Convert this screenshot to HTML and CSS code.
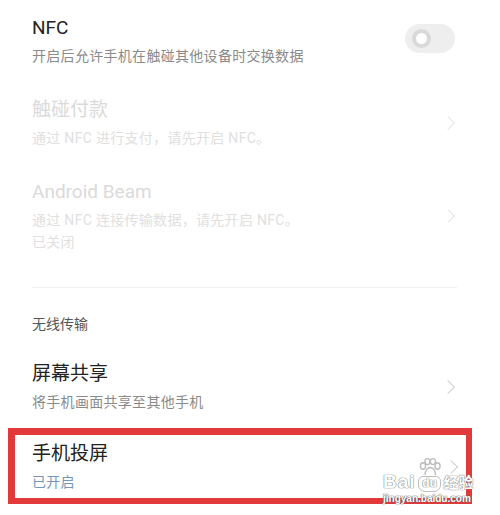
FILE: index.html
```html
<!DOCTYPE html>
<html lang="zh-CN">
  <head>
    <meta charset="UTF-8" />
    <meta name="viewport" content="width=device-width, initial-scale=1" />
    <title>NFC</title>
    <link rel="stylesheet" href="styles.css">
  </head>
  <body>
    <div class="page">
      <!-- NFC switch -->
      <div class="item">
        <div class="text">
          <div class="title">NFC</div>
          <div class="sub">开启后允许手机在触碰其他设备时交换数据</div>
        </div>
        <div class="toggle"><span class="knob"></span></div>
      </div>

      <div class="item disabled">
        <div class="text">
          <div class="title">触碰付款</div>
          <div class="sub">通过 NFC 进行支付，请先开启 NFC。</div>
        </div>
        <span class="chevron"></span>
      </div>

      <div class="item disabled">
        <div class="text">
          <div class="title">Android Beam</div>
          <div class="sub">通过 NFC 连接传输数据，请先开启 NFC。</div>
          <div class="sub">已关闭</div>
        </div>
        <span class="chevron"></span>
      </div>

      <div class="divider"></div>

      <div class="section">无线传输</div>

      <div class="item">
        <div class="text">
          <div class="title">屏幕共享</div>
          <div class="sub">将手机画面共享至其他手机</div>
        </div>
        <span class="chevron"></span>
      </div>

      <!-- highlighted row -->
      <div class="highlight">
        <div class="item">
          <div class="text">
            <div class="title">手机投屏</div>
            <div class="sub on">已开启</div>
          </div>
          <span class="chevron"></span>
        </div>
      </div>

      <!-- watermark -->
      <div class="watermark">
        <div class="wm-row">
          <span class="wm-bai">Bai</span>
          <span class="wm-du">
            <svg class="paw" width="24" height="18" viewBox="0 0 24 18">
              <g fill="#ffffff" stroke="#bdbdbd" stroke-width="1.4">
                <ellipse cx="5" cy="8" rx="2.6" ry="3.2" />
                <ellipse cx="9.5" cy="3.6" rx="2.6" ry="3" />
                <ellipse cx="15" cy="3.6" rx="2.6" ry="3" />
                <ellipse cx="19.5" cy="8" rx="2.6" ry="3.2" />
                <path d="M7 17 C7 12 10 9.5 12.3 9.5 C14.6 9.5 17.5 12 17.5 17" />
              </g>
            </svg>
            <span class="du">du</span>
          </span>
          <span class="wm-jy">经验</span>
        </div>
        <div class="wm-url">jingyan.baidu.com</div>
      </div>
    </div>
  </body>
</html>
```

FILE: styles.css
```css
* {
  box-sizing: border-box;
}
html,
body {
  margin: 0;
  padding: 0;
  background: #ffffff;
  font-family: "Roboto", "Noto Sans CJK SC", sans-serif;
  color: #222222;
}
.page {
  position: relative;
  width: 500px;
  height: 515px;
  overflow: hidden;
}
.item {
  display: flex;
  align-items: center;
  padding: 15px 45px 15px 32px;
}
.text {
  flex: 1;
}
.title {
  font-size: 19px;
  line-height: 26px;
  margin-bottom: 4px;
}
.sub {
  font-size: 14px;
  line-height: 22px;
  letter-spacing: 0.3px;
  color: #8a8a8a;
}
.sub.on {
  color: #7595b6;
}
.disabled .title {
  color: #dadada;
}
.disabled .sub {
  color: #e0e0e0;
}

/* switch */
.toggle {
  width: 50px;
  height: 29px;
  border-radius: 15px;
  background: #eeeeee;
  display: flex;
  align-items: center;
  padding-left: 7px;
  margin-top: -6px;
}
.knob {
  width: 19px;
  height: 19px;
  border-radius: 50%;
  background: #ffffff;
  border: 4px solid #d9d9d9;
}

.chevron {
  width: 10px;
  height: 10px;
  border-top: 1.5px solid #cfcfcf;
  border-right: 1.5px solid #cfcfcf;
  transform: rotate(45deg);
  margin-right: 2px;
}
.disabled .chevron {
  border-color: #e6e6e6;
}

.divider {
  height: 1px;
  background: #f0f0f0;
  margin: 19px 43px 0 32px;
}
.section {
  font-size: 14px;
  line-height: 22px;
  color: #555555;
  padding: 25px 32px 11px;
}

.highlight {
  margin: 0 28px 0 8px;
  border: 7px solid #e2393b;
  border-right-width: 6px;
  border-bottom-width: 6px;
}
.highlight .item {
  padding: 6px 8px 5px 17px;
}

/* baidu watermark */
.watermark {
  position: absolute;
  left: 383px;
  top: 458px;
  width: 92px;
  color: #ffffff;
  text-shadow: 0 0 1px #888, 0 0 1px #888, 0 0 1px #888;
}
.wm-row {
  display: flex;
  align-items: flex-end;
  gap: 2px;
}
.wm-bai {
  font-family: "Liberation Sans", sans-serif;
  font-size: 19px;
  line-height: 20px;
  font-weight: bold;
  letter-spacing: 1px;
}
.wm-du {
  display: flex;
  flex-direction: column;
  align-items: center;
}
.du {
  font-family: "Liberation Sans", sans-serif;
  font-size: 12px;
  font-weight: bold;
  line-height: 13px;
  padding: 0 3px 1px;
  border-radius: 5px 5px 7px 7px;
  border: 1px solid #bdbdbd;
}
.wm-jy {
  font-size: 15px;
  line-height: 18px;
  font-weight: bold;
}
.wm-url {
  font-family: "Liberation Sans", sans-serif;
  font-size: 10px;
  font-weight: bold;
  line-height: 12px;
  margin-top: 1px;
  text-shadow: 0 0 1px #666, 0 0 1px #666, 0 0 1px #666;
}
```
